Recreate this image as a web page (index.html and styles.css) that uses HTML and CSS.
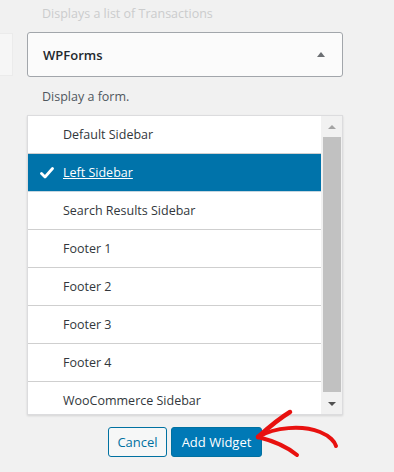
FILE: index.html
```html
<!DOCTYPE html>
<html lang="en">
<head>
    <meta charset="UTF-8">
    <meta name="viewport" content="width=device-width, initial-scale=1.0">
    <title>Add Widget</title>
    <link rel="stylesheet" href="styles.css">
</head>
<body>
    <div class="page">
        <p class="faded-desc">Displays a list of Transactions</p>

        <div class="widget-row">
            <div class="ghost-box"></div>
            <div class="widget-head">
                <span class="widget-title">WPForms</span>
                <span class="toggle-up"></span>
            </div>
        </div>

        <p class="widget-desc">Display a form.</p>

        <div class="chooser">
            <ul class="sidebars">
                <li class="sidebar">Default Sidebar</li>
                <li class="sidebar selected">
                    <svg class="check" width="14" height="12" viewBox="0 0 14 12">
                        <path d="M1.5 6.5 L5 10 L12.5 1.5" fill="none" stroke="#fff" stroke-width="2.8" stroke-linecap="round" stroke-linejoin="round"/>
                    </svg>
                    <a href="#">Left Sidebar</a>
                </li>
                <li class="sidebar">Search Results Sidebar</li>
                <li class="sidebar">Footer 1</li>
                <li class="sidebar">Footer 2</li>
                <li class="sidebar">Footer 3</li>
                <li class="sidebar">Footer 4</li>
                <li class="sidebar">WooCommerce Sidebar</li>
            </ul>
            <div class="scrollbar">
                <div class="scroll-btn"><span class="arrow-up"></span></div>
                <div class="thumb"></div>
                <div class="scroll-btn bottom"><span class="arrow-down"></span></div>
            </div>
        </div>

        <div class="actions">
            <button class="btn btn-cancel">Cancel</button>
            <button class="btn btn-add">Add Widget</button>
        </div>
    </div>

    <!-- hand drawn pointer over the button -->
    <svg class="pointer" width="110" height="72" viewBox="0 0 110 72">
        <g fill="none" stroke="#e8110f" stroke-linecap="round" stroke-linejoin="round">
            <path d="M18 37 C35 27 62 25 80 32 C90 36 95 42 96 46" stroke-width="4"/>
            <path d="M18 37 C28 28 40 18 50 12" stroke-width="4.5"/>
            <path d="M18 37 C30 40 45 45 57 55" stroke-width="4"/>
        </g>
    </svg>
</body>
</html>
```

FILE: styles.css
```css
body {
    margin: 0;
    height: 472px;
    overflow: hidden;
    background: #f1f1f1;
    font-family: 'Open Sans', 'Noto Sans', sans-serif;
    font-size: 12.5px;
    color: #32373c;
}
.page {
    padding-top: 5px;
}
.faded-desc {
    margin: 0 0 0 42px;
    line-height: 18px;
    color: #cbcccd;
}
.widget-row {
    display: flex;
    margin-top: 9px;
}
.ghost-box {
    width: 13px;
    height: 43px;
    margin-top: 1px;
    margin-right: 14px;
    box-sizing: border-box;
    background: #f6f6f6;
    border: 1px solid #ebebeb;
    border-left: none;
}
.widget-head {
    width: 316px;
    height: 45px;
    box-sizing: border-box;
    display: flex;
    align-items: center;
    justify-content: space-between;
    padding: 0 17px 0 15px;
    background: #fbfbfb;
    border: 1px solid #a2a6ab;
    border-radius: 3px;
}
.widget-title {
    font-size: 13px;
    font-weight: 600;
    color: #23282d;
}
.toggle-up {
    width: 0;
    height: 0;
    border-left: 4px solid transparent;
    border-right: 4px solid transparent;
    border-bottom: 5px solid #6c6f73;
}
.widget-desc {
    margin: 11px 0 0 42px;
    line-height: 18px;
    color: #50575e;
}
.chooser {
    display: flex;
    width: 316px;
    height: 300px;
    box-sizing: border-box;
    margin: 9px 0 0 27px;
    background: #fff;
    border: 1px solid #dcdcde;
    box-shadow: 0 1px 2px rgba(0, 0, 0, 0.12);
}
.sidebars {
    flex: 1;
    margin: 0;
    padding: 0;
    list-style: none;
    overflow: hidden;
}
.sidebar {
    display: flex;
    align-items: center;
    height: 37px;
    padding-left: 35px;
    border-bottom: 1px solid #cfcfcf;
}
.sidebar.selected {
    padding-left: 12px;
    background: #0073aa;
    border-bottom-color: #c6d6e0;
}
.sidebar.selected .check {
    margin-right: 9px;
}
.sidebar.selected a {
    color: #fff;
    text-decoration: underline;
}
.scrollbar {
    width: 21px;
    display: flex;
    flex-direction: column;
    background: #f1f1f1;
}
.scroll-btn {
    height: 21px;
    display: flex;
    align-items: center;
    justify-content: center;
}
.scroll-btn.bottom {
    margin-top: auto;
}
.arrow-up {
    border-left: 4px solid transparent;
    border-right: 4px solid transparent;
    border-bottom: 4px solid #a3a3a3;
}
.arrow-down {
    border-left: 4px solid transparent;
    border-right: 4px solid transparent;
    border-top: 4px solid #505050;
}
.thumb {
    height: 255px;
    margin: 0 1px 0 2px;
    background: #c1c1c1;
}
.actions {
    display: flex;
    justify-content: center;
    gap: 4px;
    width: 316px;
    margin: 12px 0 0 27px;
}
.btn {
    height: 30px;
    box-sizing: border-box;
    border-radius: 3px;
    font-family: inherit;
    font-size: 13px;
    padding: 0;
    cursor: pointer;
}
.btn-cancel {
    width: 59px;
    background: #f6f7f7;
    border: 1px solid #0071a1;
    color: #0071a1;
}
.btn-add {
    width: 91px;
    background: #0079b6;
    border: 1px solid #0071a1;
    color: #fff;
}
.pointer {
    position: absolute;
    left: 240px;
    top: 400px;
}
```
